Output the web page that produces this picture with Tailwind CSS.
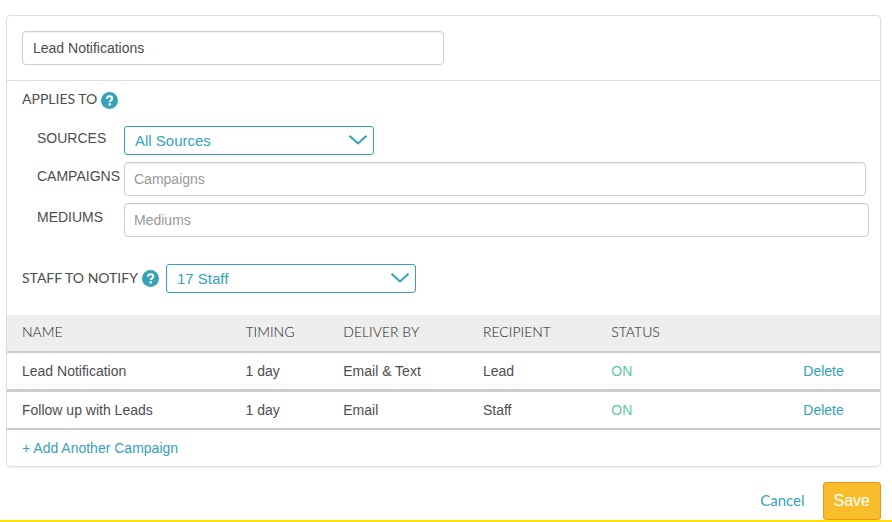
<!DOCTYPE html>
<html lang="en">
<head>
    <meta charset="UTF-8">
    <meta name="viewport" content="width=device-width, initial-scale=1.0">
    <title>Lead Notifications</title>
    <script src="https://cdn.jsdelivr.net/npm/@tailwindcss/browser@4"></script>
</head>
<body class="bg-white border-b-2 border-[#ffe100] pt-[15px] font-['Liberation_Sans',Arial,sans-serif] text-sm text-[#4d4d4d]">
    <form class="ml-[6px] mr-[11px]">
        <div class="border border-[#ddd] rounded shadow-xs">
            <div class="p-[15px] border-b border-[#ddd]">
                <input type="text" aria-label="Campaign name" value="Lead Notifications" class="block w-[422px] max-w-full h-[34px] px-[10px] border border-[#ccc] rounded inset-shadow-2xs">
            </div>

            <section class="pl-[15px] pr-[11px] pt-[7px]">
                <h2 class="flex items-center gap-1 font-['Lato',sans-serif] text-sm leading-[22px]">
                    APPLIES TO
                    <button type="button" aria-label="Help: applies to" class="mt-[2px]">
                        <svg class="block w-[17px] h-[17px]" viewBox="0 0 17 17" fill="none">
                            <circle cx="8.5" cy="8.5" r="8.5" fill="#35a2b8"/>
                            <path d="M5.9 6.8C5.9 5.2 7 4.3 8.5 4.3s2.7.9 2.7 2.3c0 1.8-2.4 1.8-2.4 3.5" stroke="#fff" stroke-width="2"/>
                            <path d="M7.6 11.2h2.3v2.3H7.6z" fill="#fff"/>
                        </svg>
                    </button>
                </h2>
                <div class="flex flex-col gap-[7px] pl-[15px] pt-4">
                    <div class="flex">
                        <label for="sources" class="w-[87px] shrink-0 pt-[2px]">SOURCES</label>
                        <div class="relative w-[250px]">
                            <select id="sources" class="block appearance-none w-full h-[29px] pl-[10px] border border-[#35a2b8] rounded-[3px] text-[15px] text-[#35a2b8]">
                                <option>All Sources</option>
                            </select>
                            <svg class="absolute right-[7px] top-[9px] w-[18px] h-[10px] pointer-events-none" viewBox="0 0 18 10" fill="none" stroke="#35a2b8" stroke-width="2"><path d="M.5.8 9 8.5 17.5.8"/></svg>
                        </div>
                    </div>
                    <div class="flex">
                        <label for="campaigns" class="w-[87px] shrink-0 pt-1">CAMPAIGNS</label>
                        <input id="campaigns" type="text" placeholder="Campaigns" class="grow h-[34px] mr-[3px] px-[9px] border border-[#ccc] rounded inset-shadow-2xs placeholder:text-[#999]">
                    </div>
                    <div class="flex">
                        <label for="mediums" class="w-[87px] shrink-0 pt-1">MEDIUMS</label>
                        <input id="mediums" type="text" placeholder="Mediums" class="grow h-[34px] px-[9px] border border-[#ccc] rounded inset-shadow-2xs placeholder:text-[#999]">
                    </div>
                </div>
            </section>

            <section class="flex items-center px-[15px] pt-[27px] pb-[22px]">
                <label for="staff" class="pb-[2px] font-['Lato',sans-serif] leading-[22px]">STAFF TO NOTIFY</label>
                <button type="button" aria-label="Help: staff to notify" class="ml-1 mr-[7px]">
                    <svg class="block w-[17px] h-[17px]" viewBox="0 0 17 17" fill="none">
                        <circle cx="8.5" cy="8.5" r="8.5" fill="#35a2b8"/>
                        <path d="M5.9 6.8C5.9 5.2 7 4.3 8.5 4.3s2.7.9 2.7 2.3c0 1.8-2.4 1.8-2.4 3.5" stroke="#fff" stroke-width="2"/>
                        <path d="M7.6 11.2h2.3v2.3H7.6z" fill="#fff"/>
                    </svg>
                </button>
                <div class="relative w-[250px]">
                    <select id="staff" class="block appearance-none w-full h-[29px] pl-[10px] border border-[#35a2b8] rounded-[3px] text-[15px] text-[#35a2b8]">
                        <option>17 Staff</option>
                    </select>
                    <svg class="absolute right-[7px] top-[9px] w-[18px] h-[10px] pointer-events-none" viewBox="0 0 18 10" fill="none" stroke="#35a2b8" stroke-width="2"><path d="M.5.8 9 8.5 17.5.8"/></svg>
                </div>
            </section>

            <table class="w-full table-fixed border-separate border-spacing-0 text-left">
                <thead class="bg-[#eee] font-['Lato',sans-serif] text-[#222]">
                    <tr>
                        <th class="w-[25.6%] h-[38px] px-[15px] pb-[2px] border-b-2 border-[#ccc] font-light">NAME</th>
                        <th class="w-[11.2%] px-[15px] pb-[2px] border-b-2 border-[#ccc] font-light">TIMING</th>
                        <th class="w-[16%] px-[15px] pb-[2px] border-b-2 border-[#ccc] font-light">DELIVER BY</th>
                        <th class="w-[14.7%] px-[15px] pb-[2px] border-b-2 border-[#ccc] font-light">RECIPIENT</th>
                        <th class="w-[22%] px-[15px] pb-[2px] border-b-2 border-[#ccc] font-light">STATUS</th>
                        <td class="px-[15px] border-b-2 border-[#ccc]"></td>
                    </tr>
                </thead>
                <tbody>
                    <tr>
                        <td class="h-[39px] px-[15px] border-b-3 border-[#ccc]">Lead Notification</td>
                        <td class="px-[15px] border-b-3 border-[#ccc]">1 day</td>
                        <td class="px-[15px] border-b-3 border-[#ccc]">Email &amp; Text</td>
                        <td class="px-[15px] border-b-3 border-[#ccc]">Lead</td>
                        <td class="px-[15px] border-b-3 border-[#ccc] text-[#5ac8a0]">ON</td>
                        <td class="px-[15px] border-b-3 border-[#ccc]"><a href="#" class="text-[#35a2b8]">Delete</a></td>
                    </tr>
                    <tr>
                        <td class="h-[38px] px-[15px] border-b-2 border-[#ccc]">Follow up with Leads</td>
                        <td class="px-[15px] border-b-2 border-[#ccc]">1 day</td>
                        <td class="px-[15px] border-b-2 border-[#ccc]">Email</td>
                        <td class="px-[15px] border-b-2 border-[#ccc]">Staff</td>
                        <td class="px-[15px] border-b-2 border-[#ccc] text-[#5ac8a0]">ON</td>
                        <td class="px-[15px] border-b-2 border-[#ccc]"><a href="#" class="text-[#35a2b8]">Delete</a></td>
                    </tr>
                </tbody>
            </table>
            <div class="px-[15px] py-2">
                <a href="#" class="text-[#35a2b8]">+ Add Another Campaign</a>
            </div>
        </div>

        <div class="flex items-center justify-end gap-[18px] pt-[15px]">
            <a href="#" class="font-['Lato',sans-serif] text-[15px] text-[#35a2b8]">Cancel</a>
            <button type="submit" class="h-[38px] px-[10px] bg-[#f7bd2b] border border-[#f2901d] rounded-[3px] text-base text-white">Save</button>
        </div>
    </form>
</body>
</html>
